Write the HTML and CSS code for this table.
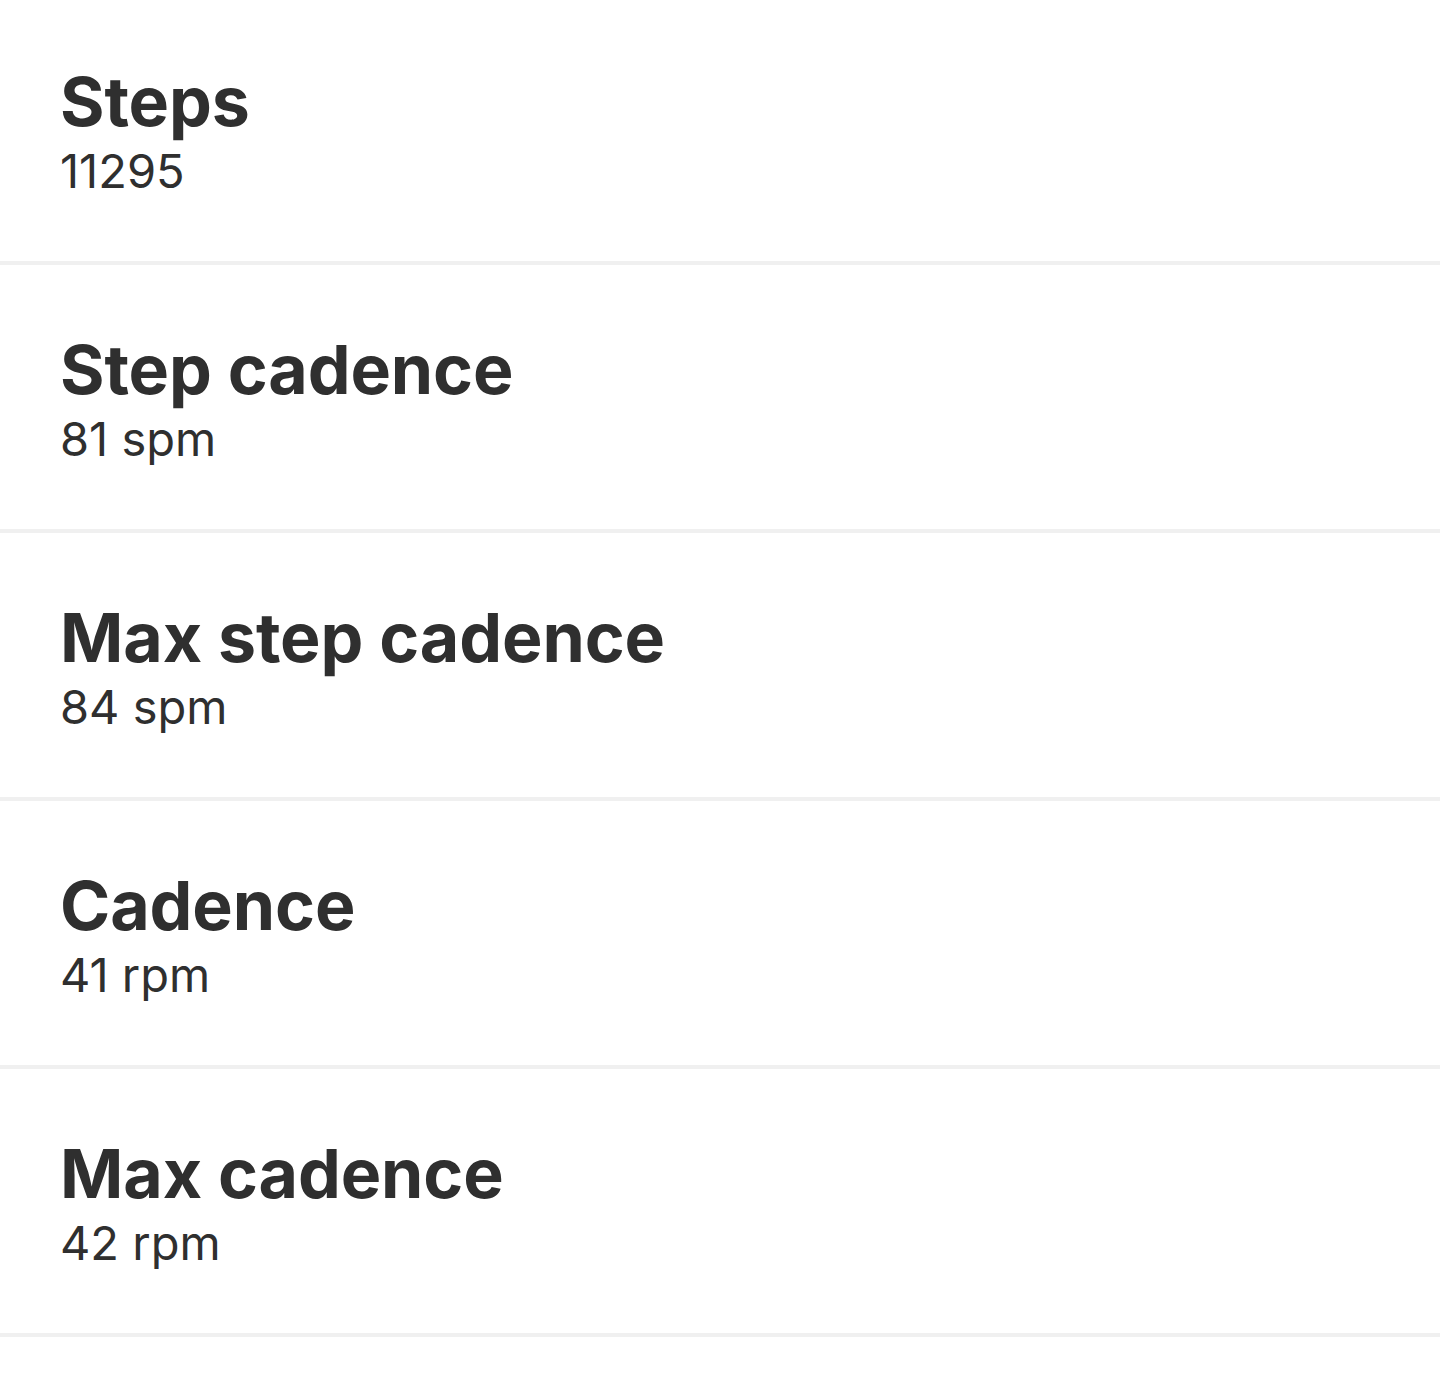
FILE: index.html
```html
<!DOCTYPE html>
<html>
<head>
<meta charset="utf-8">
<link rel="stylesheet" href="styles.css">
</head>
<body>
<ul class="list">
  <li class="row"><div class="title">Steps</div><div class="value">11295</div></li>
  <li class="row"><div class="title">Step cadence</div><div class="value">81 spm</div></li>
  <li class="row"><div class="title">Max step cadence</div><div class="value">84 spm</div></li>
  <li class="row"><div class="title">Cadence</div><div class="value">41 rpm</div></li>
  <li class="row"><div class="title">Max cadence</div><div class="value">42 rpm</div></li>
</ul>
</body>
</html>
```
FILE: styles.css
```css
html, body {
  margin: 0;
  padding: 0;
  background: #ffffff;
}
body {
  font-family: Inter, Lato, sans-serif;
  color: #2f2f2f;
}
.list {
  list-style: none;
  margin: -3px 0 0 0;
  padding: 0;
}
.row {
  height: 268px;
  box-sizing: border-box;
  border-bottom: 4px solid #f0f0f0;
  padding: 68px 0 0 60px;
  display: flex;
  flex-direction: column;
}
.title {
  font-size: 68px;
  font-weight: 700;
  line-height: 72px;
  letter-spacing: -0.1px;
}
.value {
  margin-top: 4px;
  font-size: 47px;
  font-weight: 400;
  line-height: 60px;
}
```
